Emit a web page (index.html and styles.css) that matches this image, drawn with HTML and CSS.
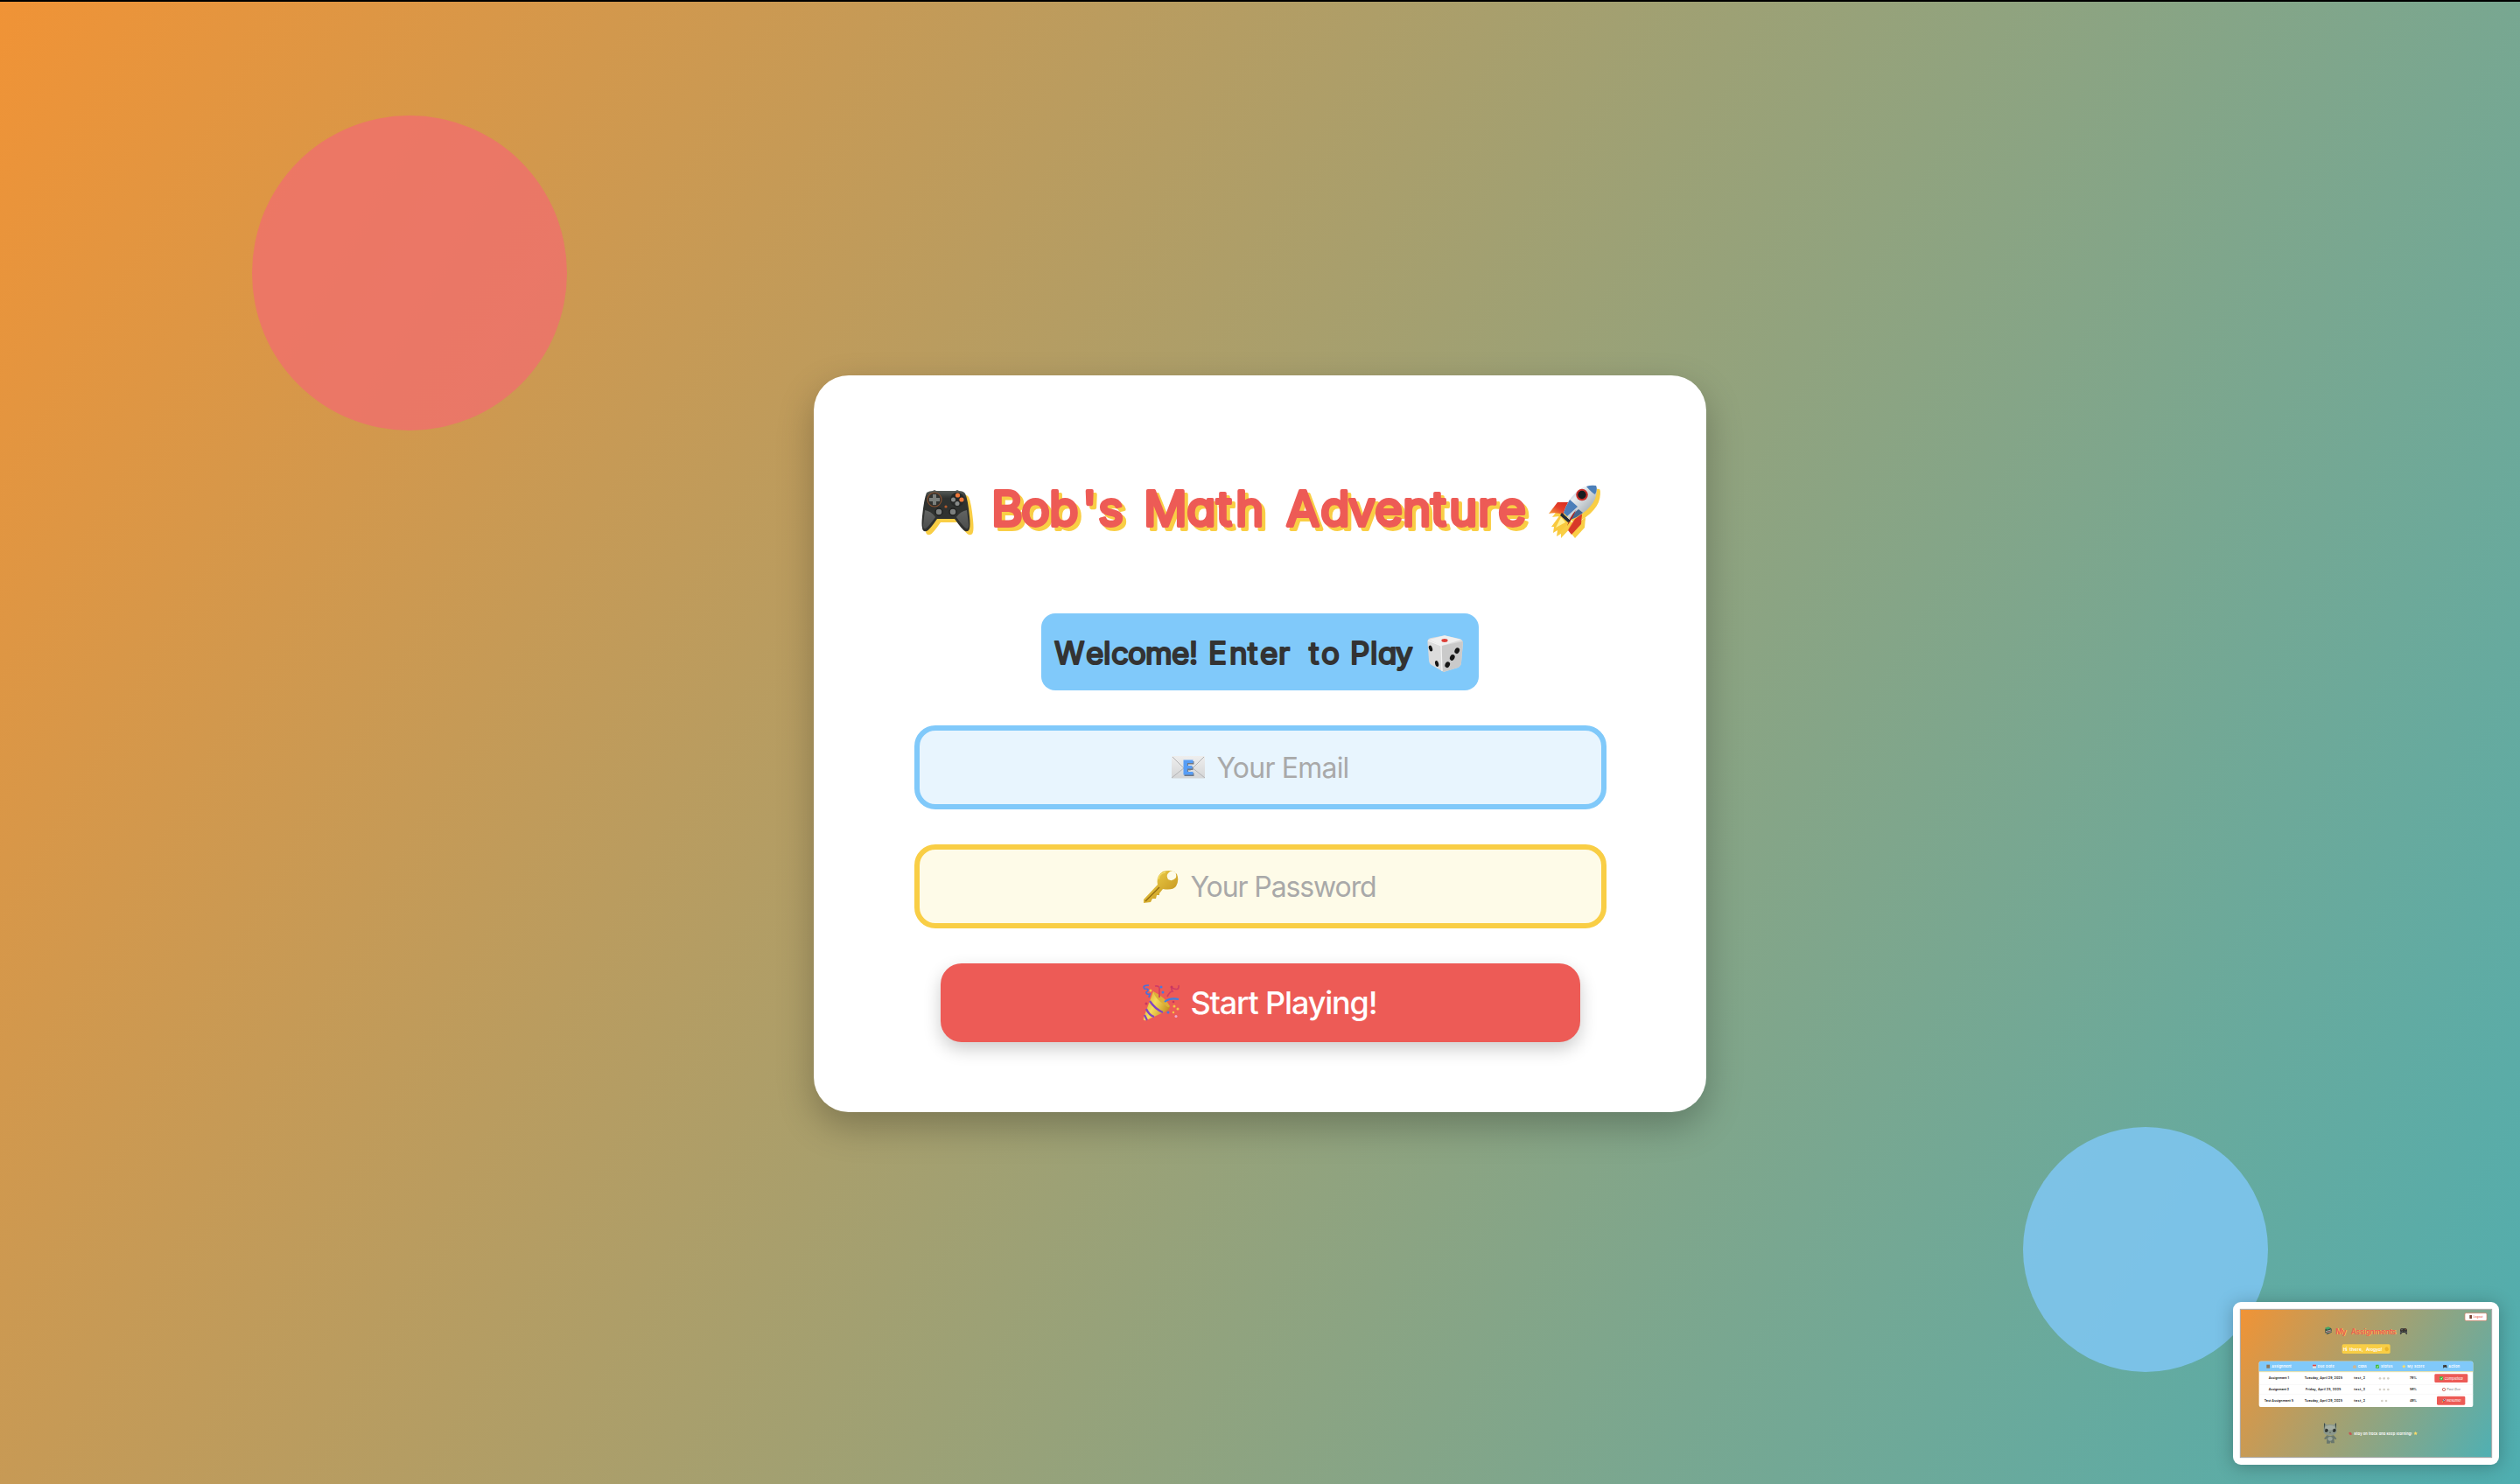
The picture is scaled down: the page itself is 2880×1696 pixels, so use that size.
FILE: index.html
```html
<!DOCTYPE html>
<html lang="en">
<head>
<meta charset="utf-8">
<title>Bob's Math Adventure</title>
<link rel="stylesheet" href="styles.css">
</head>
<body>
<div class="circle circle-red"></div>
<div class="circle circle-blue"></div>

<svg class="defs" width="0" height="0" aria-hidden="true">
  <defs>
    <linearGradient id="pad" x1="0" y1="0" x2="0" y2="1"><stop offset="0" stop-color="#5b605c"/><stop offset=".2" stop-color="#2f3230"/><stop offset="1" stop-color="#303130"/></linearGradient>
    <linearGradient id="grip" x1="0" y1="0" x2="0" y2="1"><stop offset="0" stop-color="#626463"/><stop offset="1" stop-color="#4c4e4d"/></linearGradient>
    <linearGradient id="hull" x1="0" y1="0" x2="1" y2="1"><stop offset="0" stop-color="#5b8bc4"/><stop offset=".35" stop-color="#e9edf0"/><stop offset=".7" stop-color="#b3bbc0"/><stop offset="1" stop-color="#4b6e9d"/></linearGradient>
    <linearGradient id="fin" x1="1" y1="0" x2="0" y2="1"><stop offset="0" stop-color="#d52a1e"/><stop offset=".5" stop-color="#e5402b"/><stop offset="1" stop-color="#f8a83b"/></linearGradient>
    <linearGradient id="gold" x1="0" y1="0" x2="1" y2="1"><stop offset="0" stop-color="#f4d850"/><stop offset="1" stop-color="#bd8a16"/></linearGradient>
    <linearGradient id="cone" x1="0" y1="0" x2="1" y2=".5"><stop offset="0" stop-color="#c99a26"/><stop offset=".5" stop-color="#f5dc5c"/><stop offset="1" stop-color="#c79320"/></linearGradient>
    <linearGradient id="env" x1="0" y1="0" x2="0" y2="1"><stop offset="0" stop-color="#eeeeee"/><stop offset="1" stop-color="#d4d5d6"/></linearGradient>
    <symbol id="i-pad" viewBox="0 0 56 48">
      <path d="M6 3Q9 1 13 1L15 0L17 1H39L41 0L43 1Q48 1 50 4Q53 10 55 30Q56 40 55 44Q54 48 50 47Q47 46 38 33H18Q9 46 6 47Q1 48 1 43Q0 40 1 30Q3 10 6 3Z" fill="url(#pad)"/>
      <path d="M4 23Q11 24 16 31Q9 41 5 44Q2 45 2 40ZM52 23Q45 24 40 31Q47 41 51 44Q54 45 54 40Z" fill="url(#grip)"/>
      <circle cx="15" cy="11" r="8" fill="#303230" stroke="#89502f" stroke-width="1.2"/>
      <path d="M13 5h4v4h4v4h-4v4h-4v-4H9V9h4z" fill="#7b7f7c"/>
      <circle cx="41" cy="11" r="8" fill="#262827"/>
      <circle cx="41.5" cy="6" r="2.6" fill="#f0783a"/><circle cx="46" cy="11" r="2.6" fill="#f0783a"/><circle cx="36.5" cy="11" r="2.5" fill="#888b8a"/><circle cx="41" cy="15.500" r="2.500" fill="#888b8a"/>
      <circle cx="20" cy="25" r="4" fill="#7c7f7e" stroke="#202120" stroke-width="1.500"/><circle cx="36" cy="25" r="4" fill="#7c7f7e" stroke="#202120" stroke-width="1.500"/>
      <circle cx="28" cy="19" r="1.600" fill="#b55b2d"/>
    </symbol>
    <symbol id="i-rocket" viewBox="0 0 56 58">
      <path d="M24 20H10L0 33Q8 31 17 34Z" fill="url(#fin)"/>
      <path d="M30 39L38 34Q36 43 32 46L26 55Q25 49 22 51Z" fill="url(#fin)"/>
      <path d="M33 37L38 33L37 45L26 57L22 52Z" fill="#d83a28"/>
      <path d="M14 33L3 48L6 48L5 55L10 52L10 57L24 42Z" fill="#f9c93e"/>
      <path d="M14 37L8 49L19 43Z" fill="#fff29a"/>
      <path d="M54 1Q41-1 31 9Q21 18 17 32L25 40Q40 34 48 24Q57 13 54 1Z" fill="url(#hull)"/>
      <path d="M54 1Q48 0 43 2Q49 9 53 11Q56 5 54 1ZM24 17Q19 25 17 32L21 36L33 25Z" fill="#4c7fb9"/>
      <path d="M34 28Q29 31 25 40Q33 37 39 32Z" fill="#46668f"/>
      <circle cx="38" cy="11.500" r="6.800" fill="#c82f2b"/><circle cx="38" cy="11.500" r="4.700" fill="#151a1f"/>
      <path d="M31 29Q28 37 21 47Q24 37 31 29Z" fill="#a91d19"/>
      <path d="M15 32L25 41L22 43L13 35Z" fill="#222b35"/>
    </symbol>
    <symbol id="i-die" viewBox="0 0 42 42">
      <path d="M20 .3L37 4Q41 5 41 9L39 31Q39 35 35 37L19 42L5 34Q2 32 2 28L.5 8Q0 4 5 3Z" fill="#dcdcdc"/>
      <path d="M20 .3L39 5L17 12L2 5Z" fill="#f0f0f0"/>
      <path d="M41 7L17 12Q15 25 18 42L35 37Q39 35 39 31Z" fill="#cacaca"/>
      <path d="M1 6L16 12L17 41" fill="none" stroke="#f4f4f4" stroke-width="1.200"/>
      <ellipse cx="20" cy="6" rx="3.600" ry="1.900" fill="#dd4038"/>
      <g fill="#161616"><ellipse cx="4" cy="15" rx="2" ry="3.500" transform="rotate(-18 4 15)"/><ellipse cx="11" cy="32.500" rx="2" ry="3.500" transform="rotate(-14 11 32)"/><ellipse cx="34.500" cy="17.500" rx="2.700" ry="3.500" transform="rotate(25 34 17)"/><ellipse cx="29" cy="25.500" rx="2.700" ry="3.500" transform="rotate(25 29 25)"/><ellipse cx="23.500" cy="33.500" rx="2.700" ry="3.500" transform="rotate(25 23 33)"/></g>
    </symbol>
    <symbol id="i-mail" viewBox="0 0 38 26">
      <rect x="0" y="0" width="38" height="25.500" rx="1" fill="url(#env)"/>
      <path d="M0 25L15 13M38 25L23 13M1 1L16 16Q19 18 22 16L37 1" fill="none" stroke="#b2b3b5" stroke-width="1"/>
      <path d="M14.500 6H25.500V9.500H19V12.500H24.500V16H19V19.500H25.500V23H14.500Z" fill="#707985"/>
      <path d="M13.500 4.500H24.500V8H18V11H23.500V14.500H18V18H24.500V21.500H13.500Z" fill="#579df5"/>
    </symbol>
    <symbol id="i-key" viewBox="0 0 40 37">
      <path fill-rule="evenodd" d="M22 1Q33-2 38 4Q41 11 37 18Q33 23 22 21L18 26L18 28L15 28L14 32L10 32L8 36L0 37V33L16 16Q14 6 22 1ZM29 2Q25 5 28 10Q33 13 37 8Q38 2 34 1Q31 0 29 2Z" fill="url(#gold)"/>
      <path d="M2 35L18 19" stroke="#8d6711" stroke-width="1.200"/>
      <path d="M17 10Q18 3 25 2" stroke="#f9e878" fill="none"/>
    </symbol>
    <symbol id="i-party" viewBox="0 0 42 42">
      <path d="M12 8L31 25Q31 29 26 31L4 41Q0 42 1 38Z" fill="url(#cone)"/>
      <path d="M12 8Q26 15 31 25Q29 28 25 23Q14 17 12 8Z" fill="#ddaf38"/>
      <path d="M8 19Q14 28 23 32M4 28Q7 35 13 37M2 35L5 41" stroke="#8245c2" stroke-width="2.300" fill="none"/>
      <path d="M25 20Q31 15 41 17" stroke="#3f80df" stroke-width="2.200" fill="none"/>
      <path d="M7 1Q-1 1 2 5Q9 5 4 9Q4 12 8 11L7 15" stroke="#4a70d8" stroke-width="1.700" fill="none"/>
      <path d="M14 2Q20 1 19 7V15M41 1Q42 7 36 5Q31 3 34 8Q31 8 28 14" stroke="#cf3d65" stroke-width="1.700" fill="none"/>
      <g fill="#4a78dc"><circle cx="21" cy="3" r="1.500"/><circle cx="23" cy="9" r="1.500"/><circle cx="29" cy="32" r="1.500"/></g><g fill="#f4c744"><circle cx="9" cy="7" r="1.500"/><circle cx="36" cy="25" r="1.500"/><circle cx="40" cy="28" r="1.500"/><circle cx="35" cy="32" r="1.200"/></g><g fill="#c93760"><circle cx="33" cy="3" r="1.500"/><circle cx="4" cy="22" r="1.500"/><circle cx="35" cy="20" r="1.300"/></g><circle cx="38" cy="36.500" r="1.500" fill="#f0a5cd"/>
    </symbol>
  </defs>
</svg>

<main class="card">
  <h1 class="title">
    <svg class="title-art" width="780" height="70" viewBox="0 0 780 70">
      <use href="#i-pad" x="3" y="10" width="56" height="48"/>
      <g class="comic title-text">
        <text x="83 117 149 187 205" y="50.500">Bob's</text>
        <text x="257 306 340 362" y="50.500">Math</text>
        <text x="420 459 491 521 553 585 606 639 662" y="50.500">Adventure</text>
      </g>
      <use href="#i-rocket" x="720" y="4" width="56" height="58"/>
    </svg>
  </h1>
  <h2 class="badge">
    <svg width="500" height="88" viewBox="0 0 500 88">
      <g class="comic badge-text">
        <text x="15 51 71 80 99 119 149 169" y="58">Welcome!</text>
        <text x="191 215 236 250 271" y="58">Enter</text>
        <text x="306 320" y="58">to</text>
        <text x="353 376 385 405" y="58">Play</text>
      </g>
      <use href="#i-die" x="441" y="25" width="42" height="42"/>
    </svg>
  </h2>
  <div class="field field-email">
    <svg width="38" height="26"><use href="#i-mail"/></svg>
    <span class="ph ph-email">Your Email</span>
  </div>
  <div class="field field-password">
    <svg width="40" height="37"><use href="#i-key"/></svg>
    <span class="ph ph-password">Your Password</span>
  </div>
  <button class="start" type="button">
    <svg width="42" height="42"><use href="#i-party"/></svg>
    <span class="start-label">Start Playing!</span>
  </button>
</main>

<aside class="preview">
  <svg width="304" height="186" viewBox="66 54 912 558">
    <defs><linearGradient id="mini" gradientUnits="userSpaceOnUse" x1="89" y1="83" x2="955" y2="583"><stop offset="0" stop-color="#f19335"/><stop offset="1" stop-color="#4fb0b3"/></linearGradient></defs>
    <rect x="91" y="79" width="862" height="508" fill="url(#mini)" stroke="#a7a7a7" stroke-width="3"/>
    <rect x="861" y="92" width="75" height="26" rx="4" fill="#fff" stroke="#dd7b62" stroke-width="2"/>
    <rect x="877" y="99" width="8" height="12" fill="#7b4435"/>
    <g class="mini">
      <text x="890" y="108" textLength="33" font-size="9" fill="#ed5b56">Logout</text>
      <g font-size="26"><g fill="#f9ce45"><text x="420" y="166" textLength="37">My</text><text x="472" y="166" textLength="155">Assignments</text></g>
      <g fill="#ed5b56"><text x="418" y="164" textLength="37">My</text><text x="470" y="164" textLength="155">Assignments</text></g></g>
      <path d="M382 146L397 141L404 146V158L389 165L382 159Z" fill="#344e47"/><path d="M381 143L393 139L402 144L389 149Z" fill="#43a566"/><path d="M384 155L402 150M385 160L403 155" stroke="#e4e7d4" stroke-width="2"/><path d="M386 158L402 153" stroke="#c04b50" stroke-width="2"/>
      <use href="#i-pad" x="638" y="143" width="26" height="23"/>
      <rect x="440" y="199" width="165" height="32" rx="5" fill="#f9ce45"/>
      <g fill="#fff" font-size="15"><text x="444" y="221" textLength="14">Hi</text><text x="466" y="221" textLength="46">there,</text><text x="522" y="221" textLength="55">Arogya!</text></g>
      <path d="M586 215Q589 205 597 209L600 217Q597 225 590 222Z" fill="#e9b52c"/>
      <rect x="155" y="257" width="734" height="157" rx="6" fill="#fff"/>
      <path d="M155 263Q155 257 161 257H883Q889 257 889 263V292H155Z" fill="#80c9fa"/>
      <path d="M155 293H889" stroke="#e6d473" stroke-width="2"/>
      <path d="M155 337H889M155 370H889" stroke="#eee" stroke-width="1.500"/>
      <g fill="#fff" font-size="11.500"><text x="199" y="279" textLength="67">Assignment</text><text x="356" y="279" textLength="57">Due Date</text><text x="494" y="279" textLength="30">Class</text><text x="573" y="279" textLength="40">Status</text><text x="664" y="279" textLength="58">My Score</text><text x="805" y="279" textLength="38">Action</text></g>
      <g><rect x="181" y="269" width="11" height="12" fill="#8d7659"/><rect x="339" y="269" width="12" height="12" fill="#e7e3e0"/><rect x="339" y="269" width="12" height="5" fill="#d64b48"/><path d="M477 274L483 269L489 274V281H477Z" fill="#c8b79a"/><rect x="555" y="269" width="12" height="12" rx="2" fill="#3cba3c"/><path d="M558 275l3 3 4-6" stroke="#fff" stroke-width="2" fill="none"/><path d="M652 268l2 4 5 1-4 3 1 5-4-3-4 3 1-5-4-3 5-1z" fill="#fbdc68"/><use href="#i-pad" x="786" y="269" width="14" height="12"/></g>
      <g fill="#222" font-size="11"><text x="188" y="319" textLength="70">Assignment 1</text><text x="188" y="357" textLength="70">Assignment 2</text><text x="173" y="395" textLength="100">Test Assignment 5</text><text x="311" y="319" textLength="130">Tuesday, April 29, 2025</text><text x="315" y="357" textLength="121">Friday, April 25, 2025</text><text x="311" y="395" textLength="130">Tuesday, April 29, 2025</text><text x="481" y="319" textLength="38">test_2</text><text x="481" y="357" textLength="38">test_2</text><text x="481" y="395" textLength="38">test_2</text><text x="672" y="319" textLength="24">79%</text><text x="672" y="357" textLength="24">58%</text><text x="672" y="395" textLength="24">49%</text></g>
      <g fill="#d4d0c7"><circle cx="570" cy="316" r="4"/><circle cx="584" cy="316" r="4"/><circle cx="598" cy="316" r="4"/><circle cx="570" cy="354" r="4"/><circle cx="584" cy="354" r="4"/><circle cx="598" cy="354" r="4"/><circle cx="577" cy="393" r="4"/><circle cx="591" cy="393" r="4"/></g>
      <rect x="757" y="301" width="114" height="29" rx="4" fill="#ed5b56"/><rect x="765" y="377" width="97" height="30" rx="4" fill="#ed5b56"/>
      <rect x="774" y="310" width="12" height="12" rx="2" fill="#3cba3c"/><path d="M777 316l3 3 4-6" stroke="#fff" stroke-width="2" fill="none"/>
      <circle cx="789" cy="354" r="5" fill="#fff" stroke="#c95b52" stroke-width="2.500"/>
      <use href="#i-rocket" x="781" y="385" width="14" height="14"/>
      <g class="plain"><text x="791" y="320" textLength="64" font-size="12" fill="#fff">Completed!</text><text x="799" y="396" textLength="49" font-size="12" fill="#fff">Resume!</text></g>
      <text x="799" y="358" textLength="47" font-size="10.500" fill="#999" font-style="italic">Past Due</text>
      <g fill="#fff" font-size="12"><text x="481" y="509" textLength="199">Stay on track and keep learning!</text></g>
    </g>
    <path d="M463 502q4-4 8 0l3 6q-6 4-10-1z" fill="#c65652"/>
    <path d="M692 498l2 4 5 1-4 3 1 5-4-3-4 3 1-5-4-3 5-1z" fill="#fbdc68"/>
    <path d="M378 468L388 475Q399 471 411 475L420 468L422 497Q421 510 399 511Q377 510 376 497Z" fill="#8b988c"/>
    <path d="M378 468L382 473L379 492ZM420 468L416 473L420 492Z" fill="#39453e"/>
    <path d="M388 511Q399 516 411 511L421 522Q420 529 412 522L414 538H402L400 531L398 539H387L388 522Q379 529 379 521Z" fill="#69776d"/>
    <ellipse cx="399" cy="523" rx="8" ry="7" fill="#99a497"/>
    <ellipse cx="399" cy="485" rx="17" ry="8" fill="#a4ada1"/>
    <circle cx="386" cy="494" r="5.500" fill="#1c211e"/><circle cx="413" cy="494" r="5.500" fill="#1c211e"/><circle cx="384" cy="492" r="1.500" fill="#fff"/><circle cx="411" cy="492" r="1.500" fill="#fff"/>
    <path d="M396 501q3 2 6 0" stroke="#303631" stroke-width="1.500" fill="none"/>
  </svg>
</aside>
</body>
</html>
```
FILE: styles.css
```css
* { box-sizing: border-box; }

body {
  margin: 0;
  width: 2880px;
  height: 1696px;
  overflow: hidden;
  position: relative;
  border-top: 2px solid #000;
  background: linear-gradient(120deg, #f09336, #4faeb0) padding-box;
  font-family: Inter, "Liberation Sans", sans-serif;
  padding-top: 427px;
}

.defs { position: absolute; }

.circle { position: absolute; border-radius: 50%; }
.circle-red {
  left: 288px;
  top: 130px;
  width: 360px;
  height: 360px;
  background: rgba(240, 111, 109, .8);
}
.circle-blue {
  right: 288px;
  bottom: 128px;
  width: 280px;
  height: 280px;
  background: rgba(129, 200, 249, .8);
}

.card {
  position: relative;
  display: flex;
  flex-direction: column;
  align-items: center;
  gap: 40px;
  width: 1020px;
  height: 842px;
  margin: 0 auto;
  padding-top: 121px;
  border-radius: 40px;
  background: #fff;
  box-shadow: 0 16px 40px rgba(0, 0, 0, .25);
}

.title, .badge { margin: 0; line-height: 0; }
.title { margin-bottom: 41px; }
.title-art {
  overflow: visible;
  filter: drop-shadow(4px 4px 0 #f9ce45);
}

.comic {
  font-family: Inter, "Liberation Sans", sans-serif;
  font-feature-settings: "cv11" 1;
  stroke-linejoin: round;
  stroke-linecap: round;
}
.title-text {
  font-size: 55px;
  font-weight: 400;
  fill: #ed5b56;
  stroke: #ed5b56;
  stroke-width: 3.8px;
}
.badge-text {
  font-size: 35px;
  font-weight: 400;
  fill: #333;
  stroke: #333;
  stroke-width: 2.2px;
}

.badge {
  width: 500px;
  height: 88px;
  border-radius: 16px;
  background: #80c9fa;
}

.field {
  display: flex;
  align-items: center;
  justify-content: center;
  gap: 13px;
  width: 791px;
  height: 96px;
  border: 6px solid;
  border-radius: 24px;
  font-size: 32px;
  color: #a9a9a9;
  white-space: nowrap;
}
.field-email { background: #e8f5fe; border-color: #80c9fa; padding-left: 1px; }
.field-password { background: #fefbe8; border-color: #f9ce45; }
.ph-email { letter-spacing: -.8px; }
.ph-password { letter-spacing: -1.1px; }

.start {
  display: flex;
  align-items: center;
  justify-content: center;
  gap: 12px;
  width: 731px;
  height: 90px;
  padding: 0;
  border: 0;
  border-radius: 24px;
  background: #ed5b56;
  box-shadow: 0 8px 20px rgba(0, 0, 0, .2);
  color: #fff;
  font: 500 36px Inter, "Liberation Sans", sans-serif;
  letter-spacing: -1.15px;
}

.preview {
  position: absolute;
  right: 24px;
  bottom: 22px;
  width: 304px;
  height: 186px;
  border-radius: 9px;
  background: #fff;
  box-shadow: 0 2px 20px rgba(0, 0, 0, .25);
  line-height: 0;
}
.mini text {
  font-family: Inter, "Liberation Sans", sans-serif;
  font-weight: 600;
  font-feature-settings: "cv11" 1;
}
.mini .plain text { font-weight: 400; }
```
